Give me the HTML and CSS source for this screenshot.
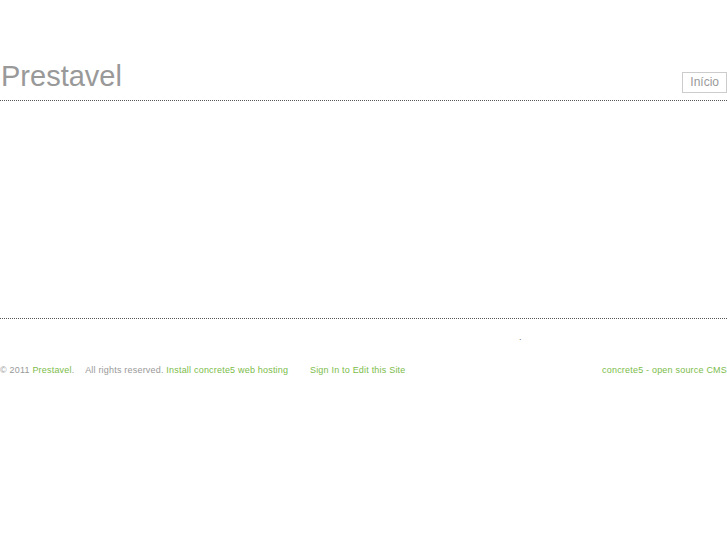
FILE: index.html
```html
<!DOCTYPE html>
<html lang="pt">
<head>
    <meta charset="UTF-8">
    <title>Prestavel</title>
    <link rel="stylesheet" href="styles.css">
</head>
<body>
    <div class="page">
        <div class="header">
            <h1 class="site-title">Prestavel</h1>
            <ul class="nav">
                <li><a href="#">Início</a></li>
            </ul>
        </div>
        <div class="content">
            <!-- area principal vazia -->
        </div>
        <div class="footer-top">
            <span class="dot">.</span>
        </div>
        <div class="footer">
            <div class="footer-left">
                <span>&copy; 2011 <a href="#">Prestavel</a>.</span>
                <span class="rights">All rights reserved.</span>
                <a href="#">Install concrete5 web hosting</a>
                <a href="#" class="signin">Sign In to Edit this Site</a>
            </div>
            <a href="#" class="powered">concrete5 - open source CMS</a>
        </div>
    </div>
</body>
</html>
```

FILE: styles.css
```css
body {
    font-family: "Liberation Sans", Arial, sans-serif;
    margin: 0;
    padding: 0;
    background: #fff;
    color: #999;
}
a {
    color: #7cbc4a;
    text-decoration: none;
}
.page {
    width: 727px;
}
.header {
    display: flex;
    justify-content: space-between;
    align-items: flex-end;
    padding-top: 58px;
    padding-bottom: 6px;
    border-bottom: 1px dotted #555;
}
.site-title {
    margin: 0;
    font-size: 29px;
    font-weight: normal;
    color: #999;
    line-height: 36px;
    padding-left: 1px;
}
.nav {
    list-style: none;
    margin: 0;
    padding: 0;
}
.nav a {
    display: block;
    border: 1px solid #ccc;
    color: #999;
    font-size: 12px;
    line-height: 19px;
    padding: 0 7px;
    margin-bottom: 1px;
}
.content {
    height: 217px;
}
.footer-top {
    border-top: 1px dotted #555;
    height: 45px;
    position: relative;
}
.dot {
    position: absolute;
    left: 519px;
    top: 13px;
    font-size: 9px;
    color: #666;
}
.footer {
    display: flex;
    justify-content: space-between;
    font-size: 9px;
    line-height: 12px;
    letter-spacing: 0.2px;
}
.rights {
    margin-left: 8px;
}
.signin {
    margin-left: 19px;
}
```
